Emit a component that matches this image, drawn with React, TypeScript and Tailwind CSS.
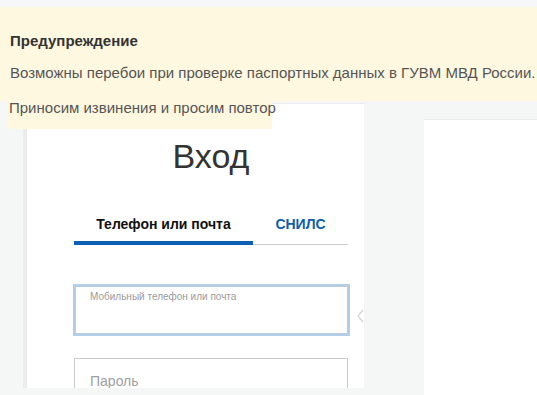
import React from "react";

export default function App() {
  const font = { fontFamily: '"Liberation Sans", Arial, sans-serif' };
  return (
    <div
      className="relative w-full h-[395px] overflow-hidden bg-[#f5f6f6]"
      style={font}
    >
      {/* page */}
      <div className="flex pt-[103px]">
        <div className="ml-[23px] w-[341px] h-[285px] shrink-0 overflow-hidden bg-white border-l-4 border-l-[#ececec] border-t border-t-[#ececec]">
          <div className="relative ml-[47px] w-[274px] pt-[32px]">
            <h1 className="text-center text-[34px] leading-[40px] text-[#333] font-normal">
              Вход
            </h1>
            <div className="mt-[40px] flex border-b border-[#cccccc]">
              <div className="-mb-px w-[179px] text-center pb-[8px] border-b-4 border-[#0c5fb3] text-[14px] leading-[17px] font-bold text-[#111]">
                Телефон или почта
              </div>
              <div className="-mb-px flex-1 text-center pb-[8px] border-b-4 border-transparent text-[14px] leading-[17px] font-bold text-[#0d5cab]">
                СНИЛС
              </div>
            </div>
            <div className="relative mt-[39px] -ml-px w-[277px] h-[52px] border-[3px] border-[#b5cee6] pl-[14px] pt-[4px]">
              <div className="text-[10px] leading-[12px] text-[#9a9a9a]">
                Мобильный телефон или почта
              </div>
              <svg
                className="absolute left-[281px] top-[22px]"
                width="8"
                height="14"
                viewBox="0 0 8 14"
              >
                <polyline
                  points="6,1 1,7 6,13"
                  fill="none"
                  stroke="#d4d4d4"
                  strokeWidth="1.2"
                />
              </svg>
            </div>
            <div className="mt-[22px] w-[274px] h-[52px] border border-[#cccccc] pl-[15px] pt-[14px]">
              <div className="text-[14px] leading-[16px] text-[#a0a0a0]">
                Пароль
              </div>
            </div>
          </div>
        </div>
        <div className="ml-[60px] mt-[16px] flex-1 h-[276px] bg-white border-t border-[#ececec]" />
      </div>

      {/* warning overlay */}
      <div className="absolute left-0 top-[7px] w-full">
        <div className="bg-[#fff8e0] h-[94px] pl-[10px] pt-[25px] whitespace-nowrap">
          <div className="text-[15px] leading-[17px] font-bold text-[#333]">
            Предупреждение
          </div>
          <div className="mt-[15px] text-[15px] leading-[17px] text-[#555]">
            Возможны перебои при проверке паспортных данных в ГУВМ МВД России.
          </div>
        </div>
        <div className="ml-[7px] w-[265px] h-[28px] bg-[#fff8e0] whitespace-nowrap pl-[2px]">
          <div className="text-[15px] leading-[13px] text-[#555]">
            Приносим извинения и просим повтор
          </div>
        </div>
      </div>
    </div>
  );
}
